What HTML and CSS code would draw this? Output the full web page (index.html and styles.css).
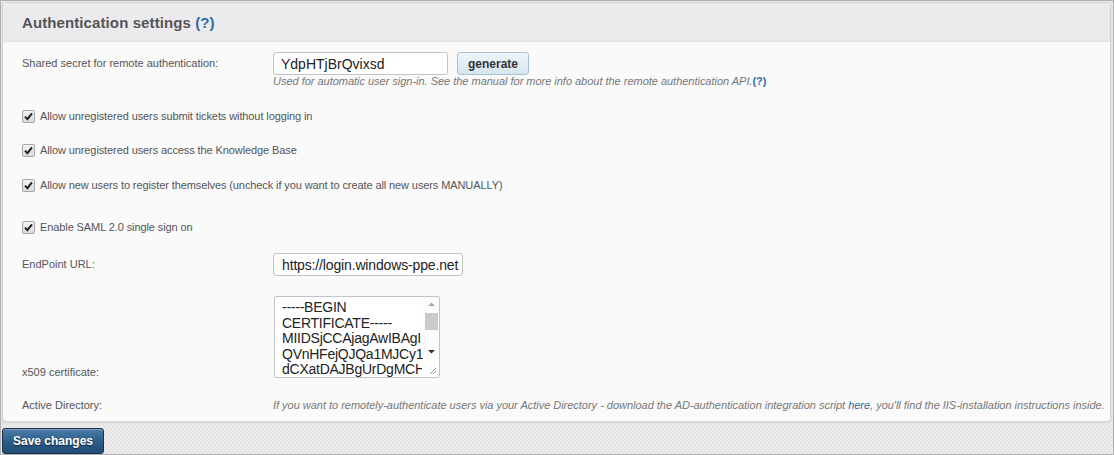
FILE: index.html
```html
<!DOCTYPE html>
<html>
<head>
<meta charset="utf-8">
<link rel="stylesheet" href="styles.css">
</head>
<body>
<div class="page">
  <div class="panel">
    <div class="panel-head">
      <h2 class="title">Authentication settings <a class="help" href="#">(?)</a></h2>
    </div>
    <div class="panel-body">
      <div class="row row-secret">
        <label class="label">Shared secret for remote authentication:</label>
        <div class="control">
          <div class="inline">
            <input class="text secret" type="text" value="YdpHTjBrQvixsd">
            <button class="btn-generate" type="button">generate</button>
          </div>
          <div class="hint">Used for automatic user sign-in. See the manual for more info about the remote authentication API.<a class="help-small" href="#">(?)</a></div>
        </div>
      </div>

      <div class="check-row c1">
        <span class="box"><svg viewBox="0 0 13 13" width="13" height="13"><path d="M3 6.6 L5.4 9.2 L10 3.4" fill="none" stroke="#222" stroke-width="2"/></svg></span>
        <span class="check-label">Allow unregistered users submit tickets without logging in</span>
      </div>
      <div class="check-row c2">
        <span class="box"><svg viewBox="0 0 13 13" width="13" height="13"><path d="M3 6.6 L5.4 9.2 L10 3.4" fill="none" stroke="#222" stroke-width="2"/></svg></span>
        <span class="check-label">Allow unregistered users access the Knowledge Base</span>
      </div>
      <div class="check-row c3">
        <span class="box"><svg viewBox="0 0 13 13" width="13" height="13"><path d="M3 6.6 L5.4 9.2 L10 3.4" fill="none" stroke="#222" stroke-width="2"/></svg></span>
        <span class="check-label">Allow new users to register themselves (uncheck if you want to create all new users MANUALLY)</span>
      </div>
      <div class="check-row c4">
        <span class="box"><svg viewBox="0 0 13 13" width="13" height="13"><path d="M3 6.6 L5.4 9.2 L10 3.4" fill="none" stroke="#222" stroke-width="2"/></svg></span>
        <span class="check-label">Enable SAML 2.0 single sign on</span>
      </div>

      <div class="row row-endpoint">
        <label class="label">EndPoint URL:</label>
        <div class="control">
          <input class="text endpoint" type="text" value="https://login.windows-ppe.net">
        </div>
      </div>

      <div class="row row-cert">
        <label class="label label-bottom">x509 certificate:</label>
        <div class="control">
          <div class="cert-wrap">
            <textarea class="cert">-----BEGIN
CERTIFICATE-----
MIIDSjCCAjagAwIBAgI
QVnHFejQJQa1MJCy1
dCXatDAJBgUrDgMCH
0AAMBAxIzAhBgNVBA
MTGmxvZ2luLndpbmRv</textarea>
            <div class="vscroll">
              <svg class="arrow" viewBox="0 0 15 15" width="15" height="15"><path d="M4 9 L7.5 5.5 L11 9 Z" fill="#a8a8a8"/></svg>
              <div class="track"><div class="thumb"></div></div>
              <svg class="arrow" viewBox="0 0 15 15" width="15" height="15"><path d="M4 6 L7.5 9.5 L11 6 Z" fill="#333"/></svg>
            </div>
            <div class="grip">
              <svg viewBox="0 0 17 17" width="17" height="17"><path d="M14 8 L8 14 M14 11 L11 14" stroke="#999" stroke-width="1"/></svg>
            </div>
          </div>
        </div>
      </div>

      <div class="row row-ad">
        <label class="label">Active Directory:</label>
        <div class="control">
          <div class="hint">If you want to remotely-authenticate users via your Active Directory - download the AD-authentication integration script <a class="link" href="#">here</a>, you'll find the IIS-installation instructions inside.</div>
        </div>
      </div>
    </div>
  </div>
  <div class="actions">
    <button class="btn-save" type="button">Save changes</button>
  </div>
</div>
</body>
</html>
```

FILE: styles.css
```css
html, body {
  margin: 0;
  padding: 0;
}
body {
  width: 1114px;
  height: 455px;
  box-sizing: border-box;
  border: 1px solid #b0b0b0;
  background-color: #e9e9e9;
  background-image: repeating-conic-gradient(#e3e3e3 0 25%, #ececec 0 50%);
  background-size: 4px 4px;
  font-family: "Liberation Sans", Arial, sans-serif;
  overflow: hidden;
}
.page {
  padding: 1px 2px 0 1px;
}
.panel {
  border: 1px solid #d4d4d4;
  border-radius: 4px;
  background: #fafafa;
  box-shadow: 0 1px 2px rgba(0,0,0,0.08);
  overflow: hidden;
}
.panel-head {
  height: 38px;
  background: #ebebed;
  border-bottom: 1px solid #e2e2e4;
  padding-left: 19px;
  display: flex;
  align-items: center;
}
.title {
  margin: 0;
  font-size: 15px;
  font-weight: bold;
  color: #555;
  letter-spacing: 0.1px;
}
.help {
  color: #2d6ca2;
  text-decoration: none;
}
.panel-body {
  padding: 10px 0 9px 19px;
}
.row {
  display: flex;
  align-items: flex-start;
}
.label {
  width: 251px;
  flex: none;
  font-size: 11px;
  color: #555;
}
.row-secret .label {
  line-height: 23px;
}
.control {
  display: flex;
  flex-direction: column;
}
.inline {
  display: flex;
  align-items: center;
  gap: 9px;
}
.text {
  box-sizing: border-box;
  height: 23px;
  border: 1px solid #c4c4c4;
  border-radius: 3px;
  background: #fff;
  font-family: "Liberation Sans", Arial, sans-serif;
  font-size: 14px;
  color: #222;
  padding: 0 7px;
  outline: none;
}
.secret {
  width: 175px;
}
.btn-generate {
  box-sizing: border-box;
  width: 72px;
  height: 23px;
  border: 1px solid #a9c2d4;
  border-radius: 3px;
  background: linear-gradient(#eef5fa, #d7e6f0);
  font-family: "Liberation Sans", Arial, sans-serif;
  font-size: 12px;
  font-weight: bold;
  color: #333;
  padding: 0;
}
.hint {
  font-size: 11px;
  font-style: italic;
  color: #777;
  line-height: 13px;
  letter-spacing: -0.02px;
}
.help-small {
  color: #2d6ca2;
  text-decoration: none;
  font-style: normal;
  font-weight: bold;
}
.link {
  color: #2d6ca2;
  text-decoration: none;
}
.check-row {
  display: flex;
  align-items: center;
  height: 16px;
  gap: 5px;
}
.c1 { margin-top: 20px; }
.c2 { margin-top: 18px; }
.c3 { margin-top: 19px; }
.c4 { margin-top: 26px; }
.box {
  width: 13px;
  height: 13px;
  box-sizing: border-box;
  border: 1px solid #a6a6a6;
  border-radius: 2px;
  background: linear-gradient(#f4f4f4, #dcdcdc);
  display: flex;
  align-items: center;
  justify-content: center;
  flex: none;
}
.box svg {
  display: block;
  margin: -1px;
}
.check-label {
  font-size: 11px;
  color: #555;
  letter-spacing: -0.1px;
}
.row-endpoint {
  margin-top: 18px;
}
.row-endpoint .label {
  line-height: 23px;
}
.endpoint {
  width: 190px;
  padding: 0 0 0 8px;
  letter-spacing: -0.15px;
}
.row-cert {
  margin-top: 20px;
  align-items: flex-end;
}
.label-bottom {
  line-height: 13px;
  margin-bottom: -1px;
}
.cert-wrap {
  position: relative;
  width: 166px;
  height: 82px;
  margin-left: 1px;
}
.cert {
  box-sizing: border-box;
  width: 166px;
  height: 82px;
  margin: 0;
  border: 1px solid #c4c4c4;
  border-radius: 2px;
  background: #fff;
  font-family: "Liberation Sans", Arial, sans-serif;
  font-size: 14px;
  line-height: 15.5px;
  letter-spacing: -0.25px;
  color: #222;
  padding: 3px 18px 0 7px;
  resize: none;
  overflow: hidden;
  white-space: pre;
  outline: none;
  display: block;
}
.vscroll {
  position: absolute;
  top: 1px;
  right: 1px;
  width: 16px;
  height: 62px;
  background: #fcfcfc;
  display: flex;
  flex-direction: column;
  align-items: center;
}
.arrow {
  display: block;
  flex: none;
}
.track {
  flex: 1;
  width: 100%;
  display: flex;
  justify-content: center;
  padding-top: 1px;
}
.thumb {
  width: 13px;
  height: 17px;
  background: #cbcbcb;
}
.grip {
  position: absolute;
  right: 1px;
  bottom: 1px;
  width: 17px;
  height: 17px;
  background: #fff;
}
.grip svg {
  display: block;
}
.row-ad {
  margin-top: 21px;
}
.row-ad .label {
  line-height: 13px;
}
.actions {
  padding-top: 6px;
}
.btn-save {
  box-sizing: border-box;
  width: 102px;
  height: 26px;
  border: 1px solid #1c3247;
  border-radius: 3px;
  background: linear-gradient(#4d7ea8, #2a5a86 55%, #214d77);
  box-shadow: inset 0 1px 0 rgba(255,255,255,0.25);
  font-family: "Liberation Sans", Arial, sans-serif;
  font-size: 12px;
  font-weight: bold;
  color: #fff;
  text-shadow: 0 1px 1px rgba(0,0,0,0.6);
  padding: 0;
}
```
